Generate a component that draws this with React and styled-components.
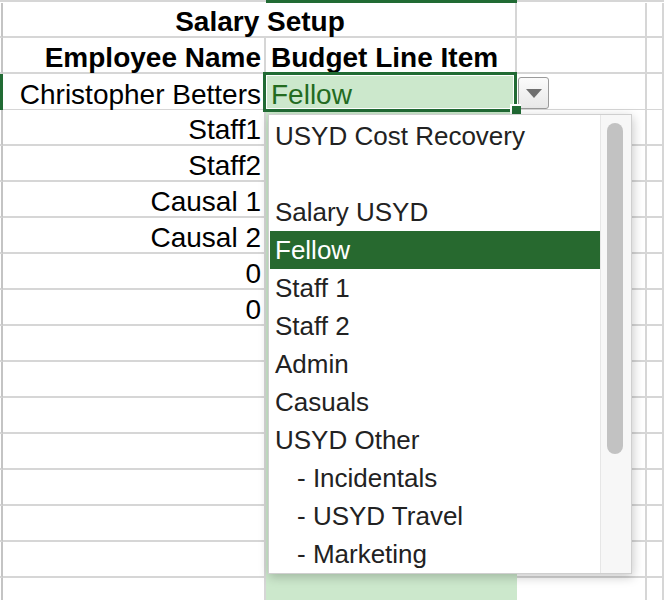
import React from 'react';
import styled, { createGlobalStyle } from 'styled-components';

const GRID = '#d6d6d6';
const EDGE = '#c4c4c4';
const SEL = '#cce8cc';
const DARK = '#216b34';

const GlobalStyle = createGlobalStyle`
  html, body { margin: 0; padding: 0; background: #fff; overflow: hidden; }
  body { font-family: "Liberation Sans", Arial, Helvetica, sans-serif; }
`;

const Sheet = styled.div`
  width: 664px;
  height: 600px;
  overflow: hidden;
  background: #fff;
`;

const Row = styled.div`
  display: grid;
  grid-template-columns: 3px 263px 251px 130px 1fr;
  height: ${(p) => p.$h ?? 36}px;
`;

const HeaderSeg = styled.div`
  background: ${(p) =>
    p.$active ? DARK : `linear-gradient(${GRID} 0 2px, #fff 2px)`};
`;

const Edge = styled.div`
  box-sizing: border-box;
  background: ${(p) => (p.$active ? DARK : '#fff')};
  border-right: 2px solid ${(p) => (p.$active ? DARK : EDGE)};
  border-bottom: 2px solid ${(p) => (p.$active ? DARK : GRID)};
`;

const Cell = styled.div`
  box-sizing: border-box;
  min-width: 0;
  grid-column: span ${(p) => p.$span ?? 1};
  display: flex;
  align-items: flex-end;
  justify-content: ${(p) =>
    p.$align === 'right' ? 'flex-end' : p.$align === 'center' ? 'center' : 'flex-start'};
  padding: 0 3px 0 5px;
  background: ${(p) => (p.$sel ? SEL : '#fff')};
  border-right: 2px solid ${(p) => (p.$sel ? SEL : GRID)};
  border-bottom: 2px solid ${(p) => (p.$sel ? SEL : GRID)};
  font-size: 28px;
  line-height: 28px;
  font-weight: ${(p) => (p.$bold ? 700 : 400)};
  color: #000;
  white-space: nowrap;
`;

const ActiveCell = styled(Cell)`
  position: relative;
  color: #236b1f;
  &::after {
    content: '';
    position: absolute;
    left: -3px;
    top: -2px;
    right: -2px;
    bottom: -3px;
    border: 3px solid ${DARK};
    box-shadow: inset 0 0 0 1px #fff;
    pointer-events: none;
  }
`;

const FillHandle = styled.span`
  position: absolute;
  right: -6px;
  bottom: -5px;
  width: 9px;
  height: 8px;
  background: ${DARK};
  border-top: 2px solid #fff;
  border-left: 2px solid #fff;
  z-index: 2;
`;

const ButtonCell = styled(Cell)`
  align-items: flex-start;
  padding: 3px 0 0 1px;
`;

const DropButton = styled.div`
  box-sizing: border-box;
  width: 31px;
  height: 32px;
  border: 1px solid #9b9b9b;
  border-radius: 3px;
  background: linear-gradient(#fbfbfb, #e8e8e8);
  display: flex;
  align-items: center;
  justify-content: center;
`;

const Dropdown = styled.div`
  position: absolute;
  top: calc(100% + 5px);
  left: 2px;
  z-index: 10;
  box-sizing: border-box;
  width: 364px;
  height: 460px;
  display: flex;
  background: #fff;
  border: 1px solid #cfcfcf;
  box-shadow: 1px 3px 10px rgba(0, 0, 0, 0.22);
  font-size: 26px;
  line-height: 38px;
  font-weight: 400;
  color: #222;
`;

const List = styled.ul`
  list-style: none;
  margin: 0;
  padding: 2px 0 0 1px;
  flex: 1;
  min-width: 0;
`;

const Item = styled.li`
  height: 38px;
  padding-left: ${(p) => (p.$indent ? 27 : 5)}px;
  background: ${(p) => (p.$selected ? '#27692f' : 'transparent')};
  color: ${(p) => (p.$selected ? '#fff' : '#222')};
  white-space: pre;
`;

const Track = styled.div`
  box-sizing: border-box;
  width: 31px;
  border-left: 1px solid #e6e6e6;
  background: #f7f7f7;
  padding: 8px 0 0 6px;
`;

const Thumb = styled.div`
  width: 16px;
  height: 331px;
  border-radius: 8px;
  background: #c2c2c2;
`;

const options = [
  { label: 'USYD Cost Recovery' },
  { label: '' },
  { label: 'Salary USYD' },
  { label: 'Fellow', selected: true },
  { label: 'Staff 1' },
  { label: 'Staff 2' },
  { label: 'Admin' },
  { label: 'Casuals' },
  { label: 'USYD Other' },
  { label: '- Incidentals', indent: true },
  { label: '- USYD Travel', indent: true },
  { label: '- Marketing', indent: true },
];

const names = ['Staff1', 'Staff2', 'Causal 1', 'Causal 2', '0', '0', '', '', '', '', '', '', '', ''];

export default function App() {
  return (
    <>
      <GlobalStyle />
      <Sheet>
        <Row $h={3}>
          <HeaderSeg />
          <HeaderSeg />
          <HeaderSeg $active />
          <HeaderSeg />
          <HeaderSeg />
        </Row>
        <Row $h={35}>
          <Edge />
          <Cell $span={2} $align="center" $bold>
            Salary Setup
          </Cell>
          <Cell />
          <Cell />
        </Row>
        <Row>
          <Edge />
          <Cell $align="right" $bold>
            Employee Name
          </Cell>
          <Cell $bold>Budget Line Item</Cell>
          <Cell />
          <Cell />
        </Row>
        <Row>
          <Edge $active />
          <Cell $align="right">Christopher Betters</Cell>
          <ActiveCell $sel>
            Fellow
            <FillHandle />
            <Dropdown>
              <List>
                {options.map((o, i) => (
                  <Item key={i} $selected={o.selected} $indent={o.indent}>
                    {o.label || ' '}
                  </Item>
                ))}
              </List>
              <Track>
                <Thumb />
              </Track>
            </Dropdown>
          </ActiveCell>
          <ButtonCell>
            <DropButton>
              <svg width="16" height="9" viewBox="0 0 16 9">
                <polygon points="0,0 16,0 8,9" fill="#6f6f6f" />
              </svg>
            </DropButton>
          </ButtonCell>
          <Cell />
        </Row>
        {names.map((n, i) => (
          <Row key={i}>
            <Edge />
            <Cell $align="right">{n}</Cell>
            <Cell $sel />
            <Cell />
            <Cell />
          </Row>
        ))}
      </Sheet>
    </>
  );
}
